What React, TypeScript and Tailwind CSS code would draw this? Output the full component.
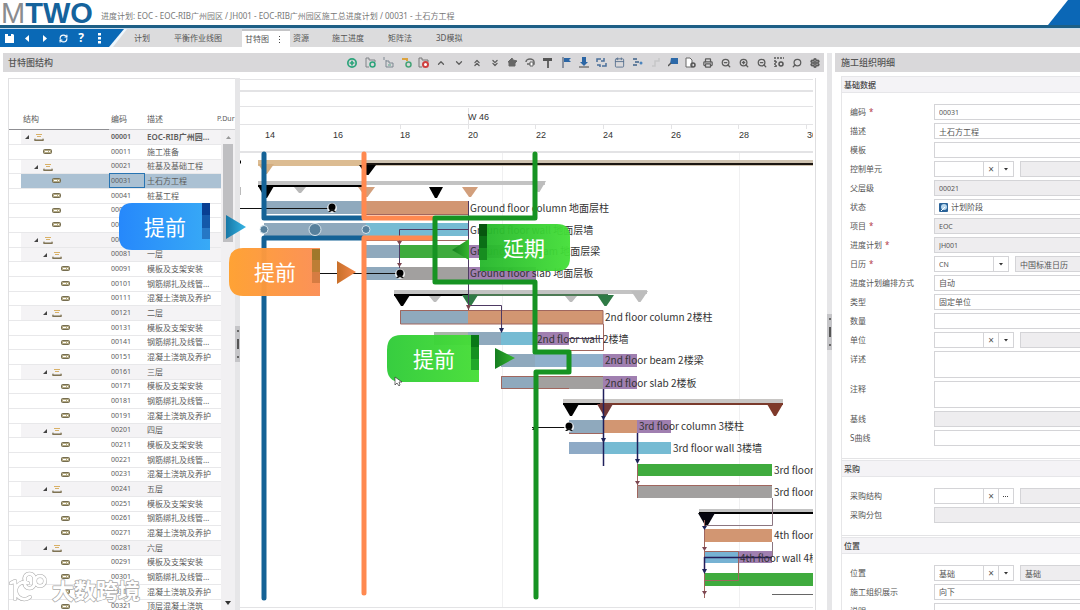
import React from "react";
import {
  LuRefreshCw, LuCirclePlus, LuChevronUp, LuChevronDown, LuChevronsUp, LuChevronsDown,
  LuCalendar, LuPrinter, LuZoomIn, LuZoomOut, LuSearch, LuSettings,
} from "react-icons/lu";

/* ---------- header ---------- */

function Header() {
  return (
    <header className="shrink-0">
      <div className="flex h-[25px] justify-between bg-white">
        <div className="flex items-end">
          <div className="flex w-[101px] items-end pl-px font-['Liberation_Sans',sans-serif] text-[29px] leading-[24px]">
            <span className="text-[#8a8c8f]">M</span>
            <span className="font-bold text-[#15639c]">TWO</span>
          </div>
          <p className="whitespace-nowrap pb-[3px] text-[8px] leading-3 text-[#777]">
            进度计划: EOC - EOC-RIB广州园区 / JH001 - EOC-RIB广州园区施工总进度计划 / 00031 - 土石方工程
          </p>
        </div>
        <svg width="32" height="25" viewBox="0 0 32 25" aria-hidden="true">
          <path d="M20 0H32V25H0Z" fill="#0b67b6" />
        </svg>
      </div>
      <div className="h-[3px] bg-[#1d5f86]" />
      <Navigation />
    </header>
  );
}

const tabs = [
  { name: "计划", cls: "ml-[9px] w-[40px]" },
  { name: "平衡作业线图", cls: "w-[68px]" },
  { name: "甘特图", cls: "w-[48px] pl-[3px] bg-white border-t-2 border-[#c4c4c6] text-[#333]", active: true },
  { name: "资源", cls: "w-[42px] pl-[3px]" },
  { name: "施工进度", cls: "w-[56px]" },
  { name: "矩阵法", cls: "w-[48px]" },
  { name: "3D模拟", cls: "w-[48px]" },
];

function Navigation() {
  const btn = "flex w-[18px] items-center justify-center";
  return (
    <nav className="flex h-[19px] border-t border-[#c9def0] bg-[#dcdcdd]">
      <div className="relative flex w-[125px] text-white">
        <svg className="absolute left-0 top-0" width="127" height="18" viewBox="0 0 127 18" aria-hidden="true">
          <path d="M0 0H127L113 18H0Z" fill="#eef6fc" />
          <path d="M0 0H124L109 18H0Z" fill="#0a69b6" />
        </svg>
        <div className="relative flex">
          <button aria-label="保存" className={btn}>
            <svg width="9" height="9" viewBox="0 0 9 9"><path d="M0 0H8L9 1V9H0Z" fill="#fff" /><path d="M3 0H6V2H3Z" fill="#0a69b6" /></svg>
          </button>
          <button aria-label="后退" className={btn}><svg width="5" height="7"><path d="M4 0V7L0 3.500Z" fill="#fff" /></svg></button>
          <button aria-label="前进" className={btn}><svg width="5" height="7"><path d="M0 0V7L4 3.500Z" fill="#fff" /></svg></button>
          <button aria-label="刷新" className={btn}><LuRefreshCw size={9} strokeWidth={3} /></button>
          <button aria-label="帮助" className={btn + " text-[12px] font-bold leading-3"}>?</button>
          <button aria-label="更多" className={btn}>
            <svg width="3" height="11"><path d="M0 0h3v2.500H0zM0 4h3v2.500H0zM0 8h3v2.500H0z" fill="#fff" /></svg>
          </button>
        </div>
      </div>
      {tabs.map((t) => (
        <button key={t.name} className={"flex items-center whitespace-nowrap text-left text-[8px] leading-3 text-[#555] " + t.cls}>
          {t.name}
          {t.active && (
            <svg className="ml-2.5" width="2" height="7" aria-hidden="true"><path d="M0 0h1v1H0zM0 3h1v1H0zM0 6h1v1H0z" fill="#444" /></svg>
          )}
        </button>
      ))}
    </nav>
  );
}

/* ---------- toolbar ---------- */

const drawn = {
  addSub: (<><path d="M1 1h3v2h6v2M1 1v9h3" stroke="#808488" /><circle cx="7.500" cy="7.500" r="2.500" stroke="#2ba37a" strokeWidth="1.500" /></>),
  indent: (<><path d="M1 0v3M3 3v7h7V6H6V4H3" stroke="#7c8791" /><path d="M5 8h3" stroke="#58a58b" /></>),
  addTask: (<><path d="M1 2h5v2" stroke="#dca33e" strokeWidth="2" /><circle cx="7.500" cy="7.500" r="2.500" stroke="#45a377" strokeWidth="1.500" /></>),
  remove: (<><path d="M1 1h3v2h6v2M1 1v9h3" stroke="#777" /><circle cx="7.500" cy="7.500" r="2.500" fill="#fff" stroke="#cf4040" strokeWidth="2" /></>),
  home: (<path d="M1 5l4-4 1 2 4 1-2 2v3H2V5Z" fill="#666" stroke="#666" />),
  undo: (<><path d="M1 5a4 3 0 0 1 8 0v2H2" stroke="#666" strokeWidth="1.500" /><path d="M5 5h3v4H5z" fill="#fff" stroke="#666" /></>),
  format: (<><path d="M0 2.500h9" stroke="#555" strokeWidth="3" /><path d="M5 4v7" stroke="#666" strokeWidth="2" /></>),
  flag: (<><path d="M2 0v11" stroke="#3a4c66" /><path d="M3 1h7L8 3l2 2H3Z" fill="#2c66a5" /></>),
  down: (<><path d="M3 0h4v5h2L5 9 1 5h2Z" fill="#2c66a5" /><path d="M0 10h10" stroke="#444" /></>),
  swap: (<path d="M1 5V2h4M8 1v3H5M1 8h3v2M6 9h4V6" stroke="#4a6f9b" strokeWidth="1.500" />),
  tree: (<><path d="M1 2h4M3 5h4M1 8h4" stroke="#3e6289" strokeWidth="1.500" /><circle cx="9" cy="6" r="1.500" fill="#4b84bd" /></>),
  ghost: (<path d="M2 9h3V4h4V1" stroke="#c6c6c8" strokeWidth="1.500" />),
  book: (<><path d="M3 1h7v6H2Z" fill="#2c69a8" /><path d="M0 9l3-3" stroke="#555" strokeWidth="1.500" /></>),
  doc: (<><path d="M1 1h4l2 2v7H1Z" fill="#fff" stroke="#666" /><circle cx="8" cy="8" r="2" stroke="#555" strokeWidth="1.500" /></>),
  list: (<><path d="M0 1h10M1 3v7M1 5h2M1 9h2" stroke="#555" strokeWidth="1.500" strokeDasharray="2 1" /><circle cx="7" cy="7" r="2" stroke="#555" strokeWidth="1.500" /></>),
};

function Drawn({ name }: { name: keyof typeof drawn }) {
  return <svg width="11" height="11" viewBox="0 0 11 11" fill="none" aria-hidden="true">{drawn[name]}</svg>;
}

const tools: [string, React.ReactNode][] = [
  ["新建", <LuCirclePlus size={10} strokeWidth={4} color="#2ba37a" />],
  ["新建子级", <Drawn name="addSub" />],
  ["缩进", <Drawn name="indent" />],
  ["新建任务", <Drawn name="addTask" />],
  ["删除", <Drawn name="remove" />],
  ["上移", <LuChevronUp size={10} strokeWidth={3} />],
  ["下移", <LuChevronDown size={10} strokeWidth={3} />],
  ["全部折叠", <LuChevronsUp size={10} strokeWidth={3} />],
  ["全部展开", <LuChevronsDown size={10} strokeWidth={3} />],
  ["主页", <Drawn name="home" />],
  ["撤销", <Drawn name="undo" />],
  ["格式", <Drawn name="format" />],
  ["标记", <Drawn name="flag" />],
  ["下载", <Drawn name="down" />],
  ["交换", <Drawn name="swap" />],
  ["日历", <LuCalendar size={11} strokeWidth={2} color="#59728f" />],
  ["层级", <Drawn name="tree" />],
  ["关联", <Drawn name="ghost" />],
  ["基线", <Drawn name="book" />],
  ["文档", <Drawn name="doc" />],
  ["打印", <LuPrinter size={10} strokeWidth={3} />],
  ["缩小", <LuZoomOut size={10} strokeWidth={3} />],
  ["放大", <LuZoomIn size={10} strokeWidth={3} />],
  ["适合", <LuZoomOut size={10} strokeWidth={3} />],
  ["列表", <Drawn name="list" />],
  ["搜索", <LuSearch className="-scale-x-100" size={10} strokeWidth={3} />],
  ["设置", <LuSettings size={10} strokeWidth={4} />],
];

/* ---------- structure tree ---------- */

type Row = { level: number; group?: boolean; text: string };
const floor = (name: string): Row[] => [
  { level: 2, group: true, text: name },
  { level: 3, text: "模板及支架安装" },
  { level: 3, text: "钢筋绑扎及线管…" },
  { level: 3, text: "混凝土浇筑及养护" },
];
const rows: Row[] = [
  { level: 0, group: true, text: "EOC-RIB广州园…" },
  { level: 1, text: "施工准备" },
  { level: 1, group: true, text: "桩基及基础工程" },
  { level: 2, text: "土石方工程" },
  { level: 2, text: "桩基工程" },
  { level: 2, text: "" },
  { level: 2, text: "" },
  { level: 1, group: true, text: "" },
  ...["一层", "二层", "三层", "四层", "五层", "六层"].flatMap(floor),
  { level: 3, text: "顶层混凝土浇筑" },
];
const indents = ["pl-1", "pl-[13px]", "pl-[22px]", "pl-[22px]"];
const leafIndents = ["pl-3", "pl-[22px]", "pl-[31px]", "pl-[40px]"];

function GroupIcon() {
  return (
    <svg width="20" height="9" viewBox="0 0 20 9" aria-hidden="true">
      <path d="M4 3V7H0Z" fill="#444" />
      <path d="M11 2.500h6M12 4.500h4" stroke="#d8b066" />
      <path d="M10 6.500v2h8v-2" stroke="#8b7f5c" fill="none" />
      <path d="M9 8h10" stroke="#75694a" />
    </svg>
  );
}

function TaskIcon() {
  return (
    <svg width="9" height="5" viewBox="0 0 9 5" aria-hidden="true">
      <rect x=".5" y=".5" width="8" height="4" rx="1" fill="#b5ab85" stroke="#756d50" />
      <path d="M2 2.500h3M6 2.500h1" stroke="#fff" />
    </svg>
  );
}

function Tree() {
  return (
    <section className="relative w-[227px] shrink-0 overflow-hidden border-l border-t border-[#e0e0e2] bg-white">
      <table className="w-full table-fixed border-collapse text-left text-[8px] leading-[10px] text-[#5c5c5c]">
        <colgroup>
          <col className="w-3" /><col className="w-[88px]" /><col className="w-9" /><col className="w-[71px]" /><col />
        </colgroup>
        <thead>
          <tr className="h-[50px] border-b border-[#cfcfd2] align-bottom">
            <th colSpan={2} className="border-b border-[#8f8f93] pb-[5px] pl-3.5 font-normal">结构</th>
            <th className="pb-[5px] pl-0.5 font-normal">编码</th>
            <th className="pb-[5px] pl-0.5 font-normal">描述</th>
            <th className="whitespace-nowrap pb-[5px] pl-px text-[7px] font-normal">P.Dur</th>
          </tr>
        </thead>
        <tbody>
          {rows.map((r, i) => {
            const bg = i === 3 ? "bg-[#abc1d3]" : r.group ? "bg-[#f4f3f5]" : "";
            return (
              <tr key={i} className={"h-[15px] border-b border-[#e8e8ea] [&:nth-child(3n)]:h-[14px] " + (i === 0 ? "font-semibold" : "")}>
                <td className="bg-white p-0" />
                <td className={"py-0 " + bg + " " + (r.group ? indents[r.level] : leafIndents[r.level])}>
                  {r.group ? <GroupIcon /> : <TaskIcon />}
                </td>
                <td className={"py-0 pl-0.5 text-[7px] " + bg + (i === 3 ? " outline outline-1 -outline-offset-1 outline-[#2874b2]" : "")}>
                  {"00" + String(i).padStart(2, "0") + "1"}
                </td>
                <td className={"whitespace-nowrap py-0 pl-0.5 " + bg}>{r.text}</td>
                <td className={"p-0 " + bg} />
              </tr>
            );
          })}
        </tbody>
      </table>
      <div className="absolute bottom-0 right-0 top-[51px] flex w-[14px] flex-col items-center bg-[#f1f0f2]">
        <svg className="my-1" width="5" height="6"><path d="M0 5L2.500 2 5 5Z" fill="#999" /></svg>
        <div className="h-[98px] w-[10px] bg-[#bfbfc2]" />
        <svg className="mb-1 mt-auto" width="6" height="5"><path d="M0 0H6L3 4Z" fill="#333" /></svg>
      </div>
    </section>
  );
}

function Splitter() {
  return (
    <div className="flex w-[5px] shrink-0 items-center bg-[#e6e6e8]">
      <div className="flex h-9 w-[5px] flex-col items-center justify-between bg-[#c5c5c8] py-1">
        <span className="h-0.5 w-0.5 bg-[#666]" />
        <span className="h-2.5 w-0.5 bg-[#555]" />
        <span className="h-0.5 w-0.5 bg-[#666]" />
      </div>
    </div>
  );
}

/* ---------- gantt chart ---------- */

const STEEL = "#8fa9bd", ORANGE = "#d29672", BLUE = "#76bbd3", GREEN = "#3fab3e", GREY = "#a2a09f", PURPLE = "#a07fb0";

// x, y, width, height, colour
const bars: [number, number, number, number, string][] = [
  [264, 201, 102, 13, STEEL], [366, 201, 102, 13, ORANGE],
  [264, 223, 102, 13, STEEL], [366, 223, 102, 13, BLUE],
  [366, 245, 34, 13, STEEL], [400, 245, 68, 13, GREEN], [468, 245, 35, 13, PURPLE],
  [366, 267, 34, 13, STEEL], [400, 267, 68, 13, GREY], [468, 267, 68, 13, PURPLE],
  [400, 310, 68, 14, STEEL], [468, 310, 135, 14, ORANGE],
  [434, 332, 34, 13, "#a9b5a9"], [468, 332, 33, 13, STEEL], [501, 332, 35, 13, BLUE], [536, 332, 33, 13, PURPLE],
  [501, 354, 102, 13, STEEL], [535, 354, 68, 13, "#8fb0cb"], [603, 354, 34, 13, PURPLE],
  [501, 376, 34, 13, STEEL], [535, 376, 68, 13, GREY], [603, 376, 34, 13, PURPLE],
  [569, 420, 34, 13, STEEL], [603, 420, 34, 13, ORANGE], [637, 420, 34, 13, PURPLE],
  [569, 442, 34, 12, "#8eaac6"], [603, 442, 68, 12, BLUE],
  [637, 464, 135, 12, GREEN], [637, 485, 135, 13, GREY],
  [704, 529, 68, 13, ORANGE], [704, 551, 34, 12, "#77b2d3"], [738, 551, 34, 12, PURPLE],
  [704, 573, 109, 13, GREEN],
];
// x, y, width, height, colour
const bands: [number, number, number, number, string][] = [
  [258, 160, 108, 6, "#dcbc92"], [366, 160, 447, 6, "#cfc3b1"], [366, 163, 447, 2, "#1c1611"],
  [258, 181, 287, 4, "#c3c3c3"], [258, 185, 105, 2, "#000"],
  [394, 290, 253, 4, "#c3c3c3"], [394, 294, 74, 2, "#000"], [468, 294, 140, 2, "#4d7a55"],
  [563, 399, 220, 4, "#c8c6c4"], [563, 403, 38, 2, "#000"], [600, 403, 183, 2, "#7a3a2c"],
  [699, 509, 114, 3, "#c3c3c3"], [699, 512, 114, 2, "#000"],
];
// left, right, top, bottom, colour
const markers: [number, number, number, number, string][] = [
  [258, 274, 164, 174, "#d3ad80"], [359, 376, 165, 175, "#000"],
  [258, 274, 186, 198, "#000"], [294, 306, 187, 193, "#b9b9b9"], [358, 375, 187, 197, "#d29f7c"],
  [429, 443, 187, 198, "#000"], [462, 478, 187, 197, "#d29f7c"], [531, 546, 181, 192, "#bdbdbd"],
  [394, 410, 295, 306, "#000"], [429, 441, 296, 302, "#bdbdbd"], [462, 478, 295, 306, "#2f7a45"],
  [565, 577, 296, 302, "#bdbdbd"], [597, 614, 295, 306, "#2f7a45"], [631, 648, 291, 302, "#bdbdbd"],
  [563, 579, 404, 416, "#000"], [597, 613, 404, 416, "#743a38"], [767, 783, 404, 416, "#7f3a2a"],
  [698, 715, 513, 526, "#06060f"],
];
const labels: [number, number, string][] = [
  [470, 212, "Ground floor column 地面层柱"], [470, 234, "Ground floor wall 地面层墙"],
  [470, 255, "Ground floor beam 地面层梁"], [470, 277, "Ground floor slab 地面层板"],
  [605, 321, "2nd floor column 2楼柱"], [537, 343, "2nd floor wall 2楼墙"],
  [605, 364, "2nd floor beam 2楼梁"], [605, 387, "2nd floor slab 2楼板"],
  [639, 430, "3rd floor column 3楼柱"], [673, 452, "3rd floor wall 3楼墙"],
  [774, 474, "3rd floor beam 3楼梁"], [774, 496, "3rd floor slab 3楼板"],
  [774, 539, "4th floor column 4楼柱"], [740, 562, "4th floor wall 4楼墙"],
];
const days: [number, string][] = [
  [265, "14"], [333, "16"], [400, "18"], [468, "20"], [536, "22"], [603, "24"], [671, "26"], [739, "28"], [807, "30"],
];

function Pin({ x, y }: { x: number; y: number }) {
  return (
    <g>
      <circle cx={x} cy={y} r="5" fill="#fff" opacity=".8" />
      <circle cx={x} cy={y - 1} r="3.500" fill="#000" />
      <path d={`M${x - 4} ${y + 4}L${x - 1} ${y + 1}H${x + 1}L${x + 4} ${y + 4}H${x + 2}L${x} ${y + 3}L${x - 2} ${y + 4}Z`} fill="#111" />
    </g>
  );
}

function Gantt() {
  return (
    <section className="mr-[11px] min-w-0 flex-1 overflow-hidden border-r border-[#dedee0] bg-white">
      <svg width="573" height="530" viewBox="240 78 573 530" role="img" aria-label="甘特图">
        <g stroke="#e3e3e5" fill="none">
          <path d="M240 79.500H813M240 106.500H813M240 124.500H813M240 607.500H813" />
          <path d="M240 91H813M240 152H813" strokeWidth="2" />
          <path d="M468.500 108V129M400.500 124V129M535.500 124V129M603.500 124V129M671.500 124V129M738.500 124V129M806.500 124V129" />
          <path d="M502.500 153V607M739.500 153V607" stroke="#f0f0f1" />
        </g>
        <g className="font-['Liberation_Sans',sans-serif] text-[9px]" fill="#333">
          <text x="468" y="120">W 46</text>
          {days.map(([x, d]) => <text key={d} x={x} y="138">{d}</text>)}
        </g>
        {bands.map(([x, y, w, h, c], i) => <rect key={i} x={x} y={y} width={w} height={h} fill={c} />)}
        {markers.map(([l, r, t, b, c], i) => <path key={i} d={`M${l} ${t}H${r}L${(l + r) / 2 + 1} ${b}H${(l + r) / 2 - 1}Z`} fill={c} />)}
        {bars.map(([x, y, w, h, c], i) => <rect key={i} x={x} y={y} width={w} height={h} fill={c} />)}
        <path d="M239 162h2" stroke="#000" strokeWidth="3" />
        <path d="M240 187v8" stroke="#bbb" strokeWidth="2" />
        <g fill="none" stroke="#a0665e">
          <path d="M366 214.500H468M366 240.500H468M400.500 310.500H603V324H400.500ZM501.500 389V376.500H603M501 388.500H569M569 433.500H603M603.500 324V350.500H569M637.500 498V485.500H772M704.500 520V598M704.500 551.500H738.500V580.500H704" />
          <path d="M772.500 498V525.500H706M772.500 542V557" stroke="#8b7580" />
        </g>
        <g fill="none" stroke="#4e3a63">
          <path d="M468.500 201V310M468 229.500H399.500V268M468 305.500H501.500V330M569 338.500H603" />
          <path d="M603.500 389V466M637.500 433V460" stroke="#20205c" strokeWidth="1.500" />
          <path d="M637.500 464V485" stroke="#a0665e" />
          <path d="M704 557.500H772M704.500 557V570" stroke="#241c5a" strokeWidth="1.500" />
        </g>
        <g fill="#7c4650">
          <path d="M397 241h5l-2.500 4zM397 263h5l-2.500 4zM466 305h5l-2.500 5zM635 481h5l-2.500 4zM702 547h5l-2.500 4zM702 591h5l-2.500 4z" />
        </g>
        <g fill="#1d2358">
          <path d="M499 328h5l-2.500 5zM601 416h5l-2.500 4zM601 438h5l-2.500 5zM635 459h5l-2.500 5zM702 526h5l-2.500 4zM702 569h5l-2.500 5z" />
        </g>
        <path d="M240 208.500H332M320 273.500H400M532 427.500H569" stroke="#111" />
        <path d="M532 430l4-6v6z" fill="#111" />
        <path d="M772 594.500H813" stroke="#666" />
        <Pin x={332} y={208} />
        <Pin x={400} y={274} />
        <Pin x={569} y={427} />
        <g className="font-['Noto_Sans_CJK_SC',sans-serif] text-[10px]" fill="#333">
          {labels.map(([x, y, t]) => <text key={t} x={x} y={y}>{t}</text>)}
        </g>
      </svg>
    </section>
  );
}

/* Callouts and date lines drawn over the tree and the chart. */
function Annotations() {
  return (
    <svg className="pointer-events-none absolute left-0 top-0" width="824" height="557" viewBox="0 53 824 557" aria-hidden="true">
      <defs>
        <linearGradient id="blue"><stop offset="0" stopColor="#2688fb" /><stop offset="1" stopColor="#38aaf6" /></linearGradient>
        <linearGradient id="orange"><stop offset="0" stopColor="#ffa02f" /><stop offset="1" stopColor="#fb8e54" /></linearGradient>
        <linearGradient id="green"><stop offset="0" stopColor="#2fcb38" /><stop offset="1" stopColor="#46de36" /></linearGradient>
        <linearGradient id="late"><stop offset="0" stopColor="#24b62a" /><stop offset="1" stopColor="#43df37" /></linearGradient>
        <linearGradient id="blueTip"><stop offset="0" stopColor="#1777a6" /><stop offset="1" stopColor="#36b5e5" /></linearGradient>
        <linearGradient id="orangeTip"><stop offset="0" stopColor="#c8702a" /><stop offset="1" stopColor="#f3874a" /></linearGradient>
        <linearGradient id="greenTip"><stop offset="0" stopColor="#157d20" /><stop offset="1" stopColor="#34b52d" /></linearGradient>
      </defs>
      <g fill="none" strokeWidth="5" strokeLinecap="round" strokeLinejoin="round">
        <path d="M264 154V218H362M362 238H264V598" stroke="#146296" />
        <path d="M364 154V218H433M433 238H364V593" stroke="#ff8950" />
        <path d="M535 154V218H435V282H535V352H569V372H536V597" stroke="#169322" />
      </g>
      <g fill="#57809c" stroke="#d6e4ec">
        <circle cx="264" cy="229.500" r="4" /><circle cx="315" cy="229.500" r="6" /><circle cx="366" cy="229.500" r="4" />
      </g>
      <path d="M226 215L246 227 226 239Z" fill="url(#blueTip)" />
      <path d="M337 261L356 272 337 284Z" fill="url(#orangeTip)" />
      <path d="M469 239V260L452 250Z" fill="url(#greenTip)" />
      <path d="M495 348L515 358 495 369Z" fill="url(#greenTip)" />

      <path d="M210 203H132Q119 203 119 218V236Q119 250 132 250H210Z" fill="url(#blue)" />
      <path d="M202 203h8v12h-8z" fill="#083f92" /><path d="M202 215h8v13h-8z" fill="#1459a9" /><path d="M202 228h8v11h-8z" fill="#2678c5" />
      <path d="M320 248H243Q229 248 229 263V281Q229 296 243 296H320Z" fill="url(#orange)" opacity=".97" />
      <path d="M312 249h8v11h-8z" fill="#9f782b" /><path d="M312 260h8v12h-8z" fill="#bd7e35" /><path d="M312 272h8v11h-8z" fill="#d67c42" />
      <path d="M480 224H557Q570 224 570 237V258Q570 271 557 271H480Z" fill="url(#late)" opacity=".95" />
      <path d="M479 224h8v12h-8z" fill="#07550f" /><path d="M479 236h8v12h-8z" fill="#0b6f16" /><path d="M479 248h8v12h-8z" fill="#178d20" />
      <path d="M479 335H401Q387 335 387 350V367Q387 382 401 382H479Z" fill="url(#green)" opacity=".96" />
      <path d="M471 335h8v12h-8z" fill="#087817" /><path d="M471 347h8v12h-8z" fill="#159020" /><path d="M471 359h8v11h-8z" fill="#21a82a" />
      <g fill="#fff" textAnchor="middle" className="text-[21px]">
        <text x="165" y="235">提前</text><text x="275" y="280">提前</text>
        <text x="524" y="256">延期</text><text x="434" y="367">提前</text>
      </g>
      <path d="M395 377v8l2-2 2 3 1-1-1-3h3Z" fill="#fff" stroke="#333" strokeWidth=".7" />

      <g strokeLinejoin="round">
        <g fill="none" strokeLinecap="round">
          <path d="M11 583l4-2v18M28 583a8.500 8.500 0 1 0 2 14M25 581a5 5 0 1 0 9 0a5 5 0 1 0-9 0M35 581a5 5 0 1 0 10 0a5 5 0 1 0-10 0" stroke="#aaa" strokeWidth="4" />
          <path d="M11 583l4-2v18M28 583a8.500 8.500 0 1 0 2 14M25 581a5 5 0 1 0 9 0a5 5 0 1 0-9 0M35 581a5 5 0 1 0 10 0a5 5 0 1 0-10 0" stroke="#fff" strokeWidth="3" />
        </g>
        <text x="52" y="599" className="text-[22px] font-bold" fill="#fff" stroke="#a8a8a8" strokeWidth="1.500" paintOrder="stroke">大数跨境</text>
      </g>
    </svg>
  );
}

/* ---------- detail form ---------- */

type Field = {
  label: string; value?: string; required?: boolean;
  kind?: "text" | "readonly" | "select" | "status" | "area" | "lookup" | "more" | "combo"; extra?: string;
};

const sections: { title: string; fields: Field[] }[] = [
  { title: "基础数据", fields: [
    { label: "编码", value: "00031", required: true },
    { label: "描述", value: "土石方工程" },
    { label: "模板" },
    { label: "控制单元", kind: "lookup" },
    { label: "父层级", value: "00021", kind: "readonly" },
    { label: "状态", value: "计划阶段", kind: "status" },
    { label: "项目", value: "EOC", required: true, kind: "readonly" },
    { label: "进度计划", value: "JH001", required: true, kind: "readonly" },
    { label: "日历", value: "CN", required: true, kind: "combo", extra: "中国标准日历" },
    { label: "进度计划编排方式", value: "自动", kind: "select" },
    { label: "类型", value: "固定单位", kind: "select" },
    { label: "数量" },
    { label: "单位", kind: "lookup" },
    { label: "详述", kind: "area" },
    { label: "注释", kind: "area" },
    { label: "基线", kind: "readonly" },
    { label: "S曲线" },
  ] },
  { title: "采购", fields: [
    { label: "采购结构", kind: "more" },
    { label: "采购分包", kind: "readonly" },
  ] },
  { title: "位置", fields: [
    { label: "位置", value: "基础", kind: "lookup", extra: "基础" },
    { label: "施工组织展示", value: "向下", kind: "select" },
    { label: "说明" },
  ] },
];

function Control({ id, field }: { id: string; field: Field }) {
  const { kind = "text", value = "", extra = "" } = field;
  const size = /^\w+$/.test(value) ? "text-[7px]" : "text-[8px]";
  const box = "h-4 min-w-0 border border-[#d4d4d7] px-1 leading-[14px] " + size + " ";
  const cell = "flex h-4 w-[15px] shrink-0 items-center justify-center border-y border-r border-[#d4d4d7] bg-white ";
  if (kind === "area") return <textarea id={id} className="h-[27px] w-full resize-none border border-r-0 border-[#d4d4d7] bg-white px-1" />;
  if (kind === "select") {
    return <select id={id} className={box + "w-full appearance-none border-r-0 bg-white"}><option>{value}</option></select>;
  }
  if (kind === "status") {
    return (
      <div className="flex h-4 w-full items-center border border-r-0 border-[#d4d4d7] bg-white pl-1">
        <svg width="9" height="9" viewBox="0 0 9 9" aria-hidden="true">
          <rect width="9" height="9" rx="1" fill="#2a6399" /><circle cx="5" cy="4" r="3" fill="#b9d8ee" /><path d="M2 8l4-4" stroke="#fff" />
        </svg>
        <select id={id} className="min-w-0 flex-1 appearance-none pl-[3px] text-[8px] leading-[14px]"><option>{value}</option></select>
      </div>
    );
  }
  if (kind === "lookup" || kind === "more" || kind === "combo") {
    const combo = kind === "combo";
    return (
      <div className="flex w-full">
        <input id={id} defaultValue={value} className={box + "bg-white " + (combo ? "w-[60px]" : "w-[50px]")} />
        {!combo && <button aria-label="清除" className={cell + "text-[10px] leading-3"}>×</button>}
        <button aria-label="选择" className={cell}>
          {kind === "more"
            ? <svg width="6" height="1"><path d="M0 0h1v1H0zM2 0h1v1H2zM4 0h1v1H4z" fill="#444" /></svg>
            : <svg width="4" height="3"><path d="M0 0H4L2 2.500Z" fill="#333" /></svg>}
        </button>
        <input aria-label={field.label + "名称"} readOnly defaultValue={extra} className="ml-1.5 h-4 min-w-0 flex-1 border border-r-0 border-[#d4d4d7] bg-[#eeedef] px-1 text-[8px] leading-[14px]" />
      </div>
    );
  }
  return <input id={id} defaultValue={value} readOnly={kind === "readonly"} className={box + "w-full border-r-0 " + (kind === "readonly" ? "bg-[#eeedef]" : "bg-white")} />;
}

function Details() {
  return (
    <aside className="flex w-[245px] shrink-0 flex-col overflow-hidden">
      <h2 className="flex h-[19px] shrink-0 items-center bg-[#d9d8da] pl-1.5 text-[9px] font-medium leading-3 text-[#555]">施工组织明细</h2>
      <div className="ml-1.5 mt-1 flex shrink-0 flex-col gap-px border-l border-[#e6e6e8]">
        {sections.map((s, si) => (
          <section key={s.title} className="border-b border-[#e3e3e5]">
            <h3 className="flex h-[17px] items-center border-b border-t border-[#e6e6e9] bg-[#f4f3f6] pl-0.5 text-[8px] font-medium leading-3 text-[#444]">{s.title}</h3>
            <div className="flex flex-col gap-[3px] pb-3 pl-2 pt-[11px]">
              {s.fields.map((f, i) => {
                const id = `f${si}-${i}`;
                return (
                  <div key={id} className="flex items-start">
                    <label htmlFor={id} className="flex h-4 w-[84px] shrink-0 items-center whitespace-nowrap text-[8px] leading-3">
                      {f.label}
                      {f.required && <span className="ml-[3px] text-[#b23a4a]">*</span>}
                    </label>
                    <div className="flex min-w-0 flex-1"><Control id={id} field={f} /></div>
                  </div>
                );
              })}
            </div>
          </section>
        ))}
      </div>
    </aside>
  );
}

export default function App() {
  return (
    <div className="flex h-screen flex-col overflow-hidden bg-white font-['Noto_Sans','Noto_Sans_CJK_SC',sans-serif] text-[#555]">
      <Header />
      <main className="mt-1.5 flex min-h-0 flex-1">
        <div className="relative flex min-w-0 flex-1 flex-col">
          <div className="ml-[3px] mr-[3px] flex h-[19px] shrink-0 items-center justify-between bg-[#d9d8da]">
            <h2 className="pl-[5px] text-[9px] font-medium leading-3 text-[#555]">甘特图结构</h2>
            <div className="flex text-[#5c5c5c]">
              {tools.map(([name, icon]) => (
                <button key={name} aria-label={name} className="flex h-[19px] w-[18px] items-center justify-center [&:nth-child(5n)]:w-[17px]">{icon}</button>
              ))}
            </div>
          </div>
          <div className="ml-2 mt-1.5 flex min-h-0 flex-1">
            <Tree />
            <Splitter />
            <Gantt />
          </div>
          <Annotations />
        </div>
        <Splitter />
        <div className="w-[3px] shrink-0" />
        <Details />
      </main>
    </div>
  );
}
